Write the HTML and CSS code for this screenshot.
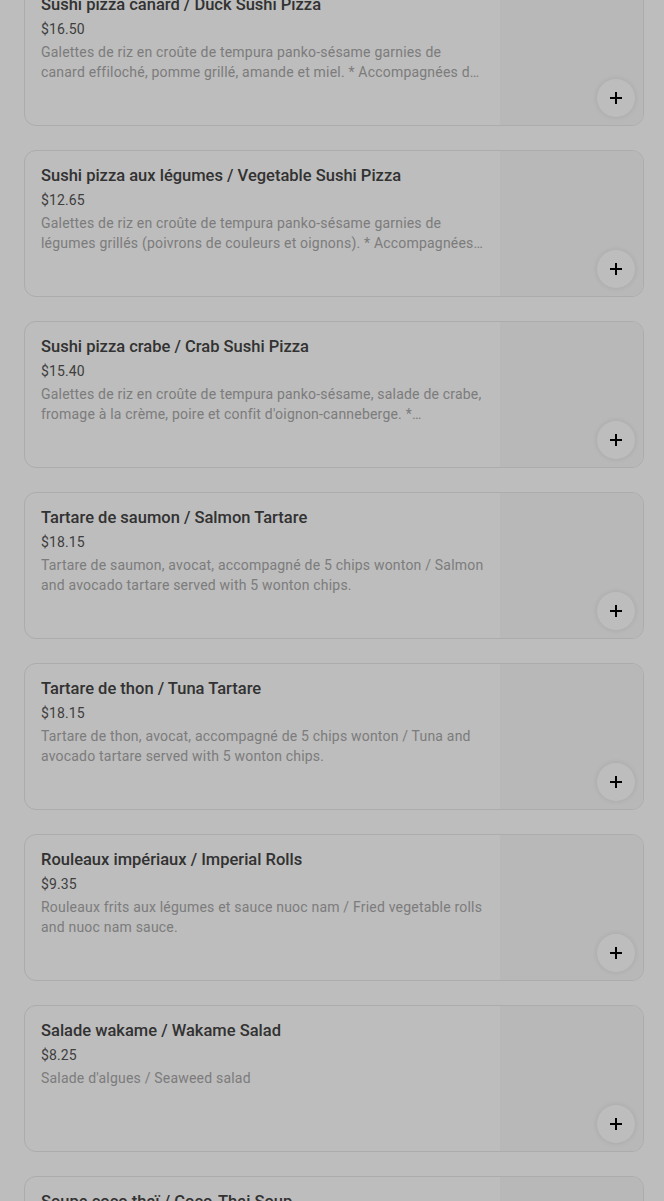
FILE: index.html
```html
<!DOCTYPE html>
<html lang="fr">
<head>
    <meta charset="UTF-8">
    <meta name="viewport" content="width=device-width, initial-scale=1.0">
    <title>Menu</title>
    <link rel="stylesheet" href="styles.css">
</head>
<body>
    <div class="menu-list">
        <div class="item">
            <div class="item-info">
                <div class="item-name">Sushi pizza canard / Duck Sushi Pizza</div>
                <div class="item-price">$16.50</div>
                <div class="item-desc">Galettes de riz en croûte de tempura panko-sésame garnies de canard effiloché, pomme grillé, amande et miel. * Accompagnées de sauce épicée / Tempura panko-sesame rice cakes</div>
            </div>
            <div class="item-img"></div>
            <button class="add-btn"><svg width="12" height="12" viewBox="0 0 12 12"><path d="M6 0v12M0 6h12" stroke="#000" stroke-width="2"/></svg></button>
        </div>

        <div class="item">
            <div class="item-info">
                <div class="item-name">Sushi pizza aux légumes / Vegetable Sushi Pizza</div>
                <div class="item-price">$12.65</div>
                <div class="item-desc">Galettes de riz en croûte de tempura panko-sésame garnies de légumes grillés (poivrons de couleurs et oignons). * Accompagnées de sauce épicée</div>
            </div>
            <div class="item-img"></div>
            <button class="add-btn"><svg width="12" height="12" viewBox="0 0 12 12"><path d="M6 0v12M0 6h12" stroke="#000" stroke-width="2"/></svg></button>
        </div>

        <div class="item">
            <div class="item-info">
                <div class="item-name">Sushi pizza crabe / Crab Sushi Pizza</div>
                <div class="item-price">$15.40</div>
                <div class="item-desc">Galettes de riz en croûte de tempura panko-sésame, salade de crabe, fromage à la crème, poire et confit d'oignon-canneberge. * Accompagnées de sauce</div>
            </div>
            <div class="item-img"></div>
            <button class="add-btn"><svg width="12" height="12" viewBox="0 0 12 12"><path d="M6 0v12M0 6h12" stroke="#000" stroke-width="2"/></svg></button>
        </div>

        <div class="item">
            <div class="item-info">
                <div class="item-name">Tartare de saumon / Salmon Tartare</div>
                <div class="item-price">$18.15</div>
                <div class="item-desc">Tartare de saumon, avocat, accompagné de 5 chips wonton / Salmon and avocado tartare served with 5 wonton chips.</div>
            </div>
            <div class="item-img"></div>
            <button class="add-btn"><svg width="12" height="12" viewBox="0 0 12 12"><path d="M6 0v12M0 6h12" stroke="#000" stroke-width="2"/></svg></button>
        </div>

        <div class="item">
            <div class="item-info">
                <div class="item-name">Tartare de thon / Tuna Tartare</div>
                <div class="item-price">$18.15</div>
                <div class="item-desc">Tartare de thon, avocat, accompagné de 5 chips wonton / Tuna and avocado tartare served with 5 wonton chips.</div>
            </div>
            <div class="item-img"></div>
            <button class="add-btn"><svg width="12" height="12" viewBox="0 0 12 12"><path d="M6 0v12M0 6h12" stroke="#000" stroke-width="2"/></svg></button>
        </div>

        <div class="item">
            <div class="item-info">
                <div class="item-name">Rouleaux impériaux / Imperial Rolls</div>
                <div class="item-price">$9.35</div>
                <div class="item-desc">Rouleaux frits aux légumes et sauce nuoc nam / Fried vegetable rolls and nuoc nam sauce.</div>
            </div>
            <div class="item-img"></div>
            <button class="add-btn"><svg width="12" height="12" viewBox="0 0 12 12"><path d="M6 0v12M0 6h12" stroke="#000" stroke-width="2"/></svg></button>
        </div>

        <div class="item">
            <div class="item-info">
                <div class="item-name">Salade wakame / Wakame Salad</div>
                <div class="item-price">$8.25</div>
                <div class="item-desc">Salade d'algues / Seaweed salad</div>
            </div>
            <div class="item-img"></div>
            <button class="add-btn"><svg width="12" height="12" viewBox="0 0 12 12"><path d="M6 0v12M0 6h12" stroke="#000" stroke-width="2"/></svg></button>
        </div>

        <div class="item">
            <div class="item-info">
                <div class="item-name">Soupe coco thaï / Coco-Thai Soup</div>
                <div class="item-price">$7.70</div>
                <div class="item-desc">Soupe au lait de coco et cari rouge</div>
            </div>
            <div class="item-img"></div>
            <button class="add-btn"><svg width="12" height="12" viewBox="0 0 12 12"><path d="M6 0v12M0 6h12" stroke="#000" stroke-width="2"/></svg></button>
        </div>
    </div>

    <div class="overlay"></div>
</body>
</html>
```

FILE: styles.css
```css
body {
    margin: 0;
    background-color: #fff;
    font-family: Roboto, "Noto Sans", sans-serif;
    color: #111;
}

.menu-list {
    display: flex;
    flex-direction: column;
    gap: 24px;
    padding: 0 20px 0 24px;
    margin-top: -21px;
}

.item {
    position: relative;
    display: flex;
    height: 145px;
    border: 1px solid #e8e8e8;
    border-radius: 12px;
    overflow: hidden;
    background-color: #fff;
}

.item-info {
    flex: 1;
    padding: 14px 15px 16px 16px;
    min-width: 0;
}

.item-name {
    font-size: 16.5px;
    font-weight: 500;
    line-height: 22px;
    color: #444;
}

.item-price {
    margin-top: 3px;
    font-size: 14px;
    line-height: 20px;
    letter-spacing: 0.1px;
    color: #555;
}

.item-desc {
    margin-top: 3px;
    font-size: 14px;
    line-height: 20px;
    letter-spacing: 0.2px;
    color: #a8a8a8;
    display: -webkit-box;
    -webkit-line-clamp: 2;
    -webkit-box-orient: vertical;
    overflow: hidden;
}

.item-img {
    width: 143px;
    background-color: #f9f9f9;
}

.add-btn {
    position: absolute;
    right: 8px;
    bottom: 8px;
    width: 38px;
    height: 38px;
    border: none;
    border-radius: 50%;
    background-color: #fff;
    box-shadow: 0 0 6px rgba(0, 0, 0, 0.1);
    display: flex;
    justify-content: center;
    align-items: center;
    padding: 0;
}

.overlay {
    position: fixed;
    top: 0;
    left: 0;
    right: 0;
    bottom: 0;
    background-color: rgba(0, 0, 0, 0.26);
}
```
